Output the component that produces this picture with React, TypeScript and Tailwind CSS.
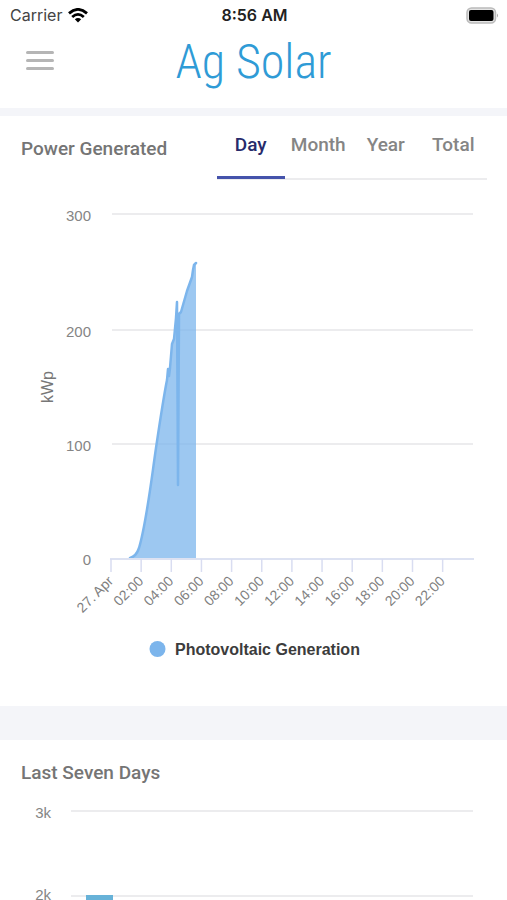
import { useState } from "react";

const tabs = ["Day", "Month", "Year", "Total"];
const hours = [
  "27. Apr", "02:00", "04:00", "06:00", "08:00", "10:00",
  "12:00", "14:00", "16:00", "18:00", "20:00", "22:00",
];
const powerGrid = [
  { label: "300", y: 24 },
  { label: "200", y: 140 },
  { label: "100", y: 254 },
];
const curve =
  "M130 368 C134 367 137 364 139 358 C146 335 150 300 156 258 C160 231 164 205 167 190 L168 179 L169 186 L170 178 L172 154 L174 149 L176 128 L177 112 L178 295 L179 124 L181 122 L187 101 L192 87 L193 80 L194 75 L196 73";

function StatusBar() {
  return (
    <div className="grid h-[30px] grid-cols-3 items-center pr-2 pl-[10px] font-['Inter',sans-serif] text-[16px] leading-5 text-[#444]">
      <div className="flex items-center gap-[6px]">
        <span>Carrier</span>
        <svg viewBox="0 0 20 15" className="h-[15px] w-5" aria-hidden="true">
          <g fill="none" stroke="#000" strokeWidth="2.8">
            <path d="M1 5.4Q10 -2.6 19 5.4" />
            <path d="M4.2 9Q10 3.8 15.8 9" />
          </g>
          <path d="M6.8 11.2Q10 8.6 13.2 11.2L10 14.6Z" fill="#000" />
        </svg>
      </div>
      <span className="text-center font-semibold text-[#222]">8:56 AM</span>
      <svg viewBox="0 0 33 17" className="h-[17px] w-[33px] justify-self-end" aria-hidden="true">
        <rect x="1" y="1" width="28.500" height="15" rx="4.500" fill="#e4e4e4" stroke="#bbb" strokeWidth="1.500" />
        <rect x="3" y="3" width="24.500" height="11" rx="2" fill="#000" />
        <path d="M31 6.500Q33 8.500 31 10.500Z" fill="#aaa" />
      </svg>
    </div>
  );
}

function PowerChart() {
  return (
    <svg
      viewBox="0 0 507 516"
      className="block w-full font-['Liberation_Sans',Arial,sans-serif]"
      role="img"
      aria-label="Photovoltaic generation by hour"
    >
      {powerGrid.map((g) => (
        <g key={g.label}>
          <path d={`M112 ${g.y}H473`} stroke="#ececee" strokeWidth="2" />
          <text x="91" y={g.y + 7} textAnchor="end" fontSize="15" fill="#858585">
            {g.label}
          </text>
        </g>
      ))}
      <text x="91" y="375" textAnchor="end" fontSize="15" fill="#858585">0</text>
      <text transform="translate(53 197) rotate(-90)" textAnchor="middle" fontSize="16" fill="#777">
        kWp
      </text>
      <path d={`${curve}V369H130Z`} fill="#7cb5ec" fillOpacity="0.75" />
      <path d={curve} fill="none" stroke="#7cb5ec" strokeWidth="2.500" strokeLinejoin="round" strokeLinecap="round" />
      <path d="M110 369H474" stroke="#dde2f2" strokeWidth="2" />
      {hours.map((h, i) => {
        const x = 111 + i * 30.15;
        return (
          <g key={h}>
            <path d={`M${x} 369V382`} stroke="#d9ddf1" strokeWidth="1.500" />
            <text
              transform={`translate(${x + 3} 392) rotate(-45)`}
              textAnchor="end"
              fontSize="14"
              fill="#808080"
            >
              {h}
            </text>
          </g>
        );
      })}
      <circle cx="157.500" cy="459" r="8" fill="#7cb5ec" />
      <text x="175" y="465" fontSize="16" fontWeight="700" fill="#3c3c3c">
        Photovoltaic Generation
      </text>
    </svg>
  );
}

function WeekChart() {
  return (
    <svg
      viewBox="0 0 507 106"
      className="block w-full font-['Liberation_Sans',Arial,sans-serif]"
      role="img"
      aria-label="Generation over the last seven days"
    >
      <path d="M71 17H473M71 102H473" stroke="#ececee" strokeWidth="2" />
      <rect x="86" y="101" width="27" height="5" fill="#67b2d8" />
      <text x="51" y="24" textAnchor="end" fontSize="15" fill="#858585">3k</text>
      <text x="51" y="106" textAnchor="end" fontSize="15" fill="#858585">2k</text>
    </svg>
  );
}

export default function App() {
  const [active, setActive] = useState("Day");
  return (
    <div className="bg-[#f4f5f9] font-['Roboto',sans-serif]">
      <header className="bg-white">
        <StatusBar />
        <div className="grid h-[78px] grid-cols-[1fr_auto_1fr] items-start px-[26px]">
          <button type="button" aria-label="Open menu" className="flex w-7 flex-col gap-[5px] pt-[21px]">
            <span className="h-[3px] w-full rounded-full bg-[#b5b5b5]" />
            <span className="h-[3px] w-full rounded-full bg-[#b5b5b5]" />
            <span className="h-[3px] w-full rounded-full bg-[#b5b5b5]" />
          </button>
          <h1 className="font-['Roboto_Condensed','Roboto',sans-serif] text-[48px] leading-[64px] font-light text-[#2f9bd6]">
            Ag Solar
          </h1>
        </div>
      </header>
      <main className="flex flex-col gap-[34px] pt-2">
        <section className="bg-white">
          <div className="flex h-[74px] items-start justify-between pr-5 pl-[21px]">
            <h2 className="pt-[21px] text-[19px] leading-6 font-medium text-[#757575]">Power Generated</h2>
            <div role="tablist" className="grid w-[270px] grid-cols-4 border-b-2 border-[#ececee]">
              {tabs.map((t) => (
                <button
                  key={t}
                  type="button"
                  role="tab"
                  aria-selected={active === t}
                  onClick={() => setActive(t)}
                  className={
                    "-mb-px h-[63px] border-b-3 pb-[2px] text-center text-[19px] leading-6 font-medium " +
                    (active === t ? "border-[#4553ab] text-[#272b6b]" : "border-transparent text-[#858585]")
                  }
                >
                  {t}
                </button>
              ))}
            </div>
          </div>
          <PowerChart />
        </section>
        <section className="bg-white pt-[21px]">
          <h2 className="pb-[9px] pl-[21px] text-[19px] leading-6 font-medium text-[#757575]">Last Seven Days</h2>
          <WeekChart />
        </section>
      </main>
    </div>
  );
}
